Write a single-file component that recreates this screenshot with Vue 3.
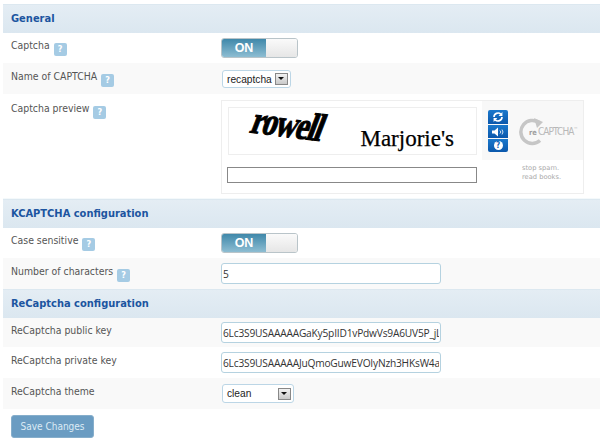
<template>
  <div class="page">
    <h3 class="section-head">General</h3>
    <div class="row">
      <label class="row-label">Captcha <span class="help">?</span></label>
      <div class="switch"><span class="switch-on">ON</span><span class="switch-off"></span></div>
    </div>
    <div class="row alt">
      <label class="row-label">Name of CAPTCHA <span class="help">?</span></label>
      <div class="select-box">
        <span class="select-value">recaptcha</span>
        <span class="select-arrow"></span>
      </div>
    </div>
    <div class="row preview-row">
      <label class="row-label">Captcha preview <span class="help">?</span></label>
      <div class="captcha">
        <div class="captcha-main">
          <div class="captcha-image">
            <span class="word-one">rowell</span>
            <span class="word-two">Marjorie's</span>
          </div>
          <div class="captcha-input"></div>
        </div>
        <div class="captcha-side">
          <div class="captcha-brand">
            <div class="captcha-buttons">
              <span class="cap-btn">
                <svg width="12" height="12" viewBox="0 0 12 12"><path d="M2 6a4 4 0 0 1 6.800-2.800M10 6a4 4 0 0 1-6.800 2.800" fill="none" stroke="#fff" stroke-width="1.700"/><path d="M10.400 1v4H6.600zM1.600 11V7h3.800z" fill="#fff"/></svg>
              </span>
              <span class="cap-btn">
                <svg width="14" height="12" viewBox="0 0 14 12"><path d="M1 4.500h2.500L7 1.500v9L3.500 7.500H1z" fill="#fff"/><path d="M9 4.500a2 2 0 0 1 0 3M11 3.500a4 4 0 0 1 0 5" fill="none" stroke="#fff" stroke-width=".8"/></svg>
              </span>
              <span class="cap-btn"><span class="cap-q">?</span></span>
            </div>
            <div class="logo">
              <svg class="logo-ring" width="28" height="30" viewBox="0 0 28 30"><path d="M21 23.500a11.500 11.500 0 1 1 -1 -18" fill="none" stroke="#c6c6c6" stroke-width="3.500"/><path d="M15 1l9 4-6 6z" fill="#c6c6c6"/></svg>
              <span class="logo-text"><b>re</b>CAPTCHA<sup>™</sup></span>
            </div>
          </div>
          <div class="slogan">stop spam.<br>read books.</div>
        </div>
      </div>
    </div>

    <h3 class="section-head">KCAPTCHA configuration</h3>
    <div class="row">
      <label class="row-label">Case sensitive <span class="help">?</span></label>
      <div class="switch"><span class="switch-on">ON</span><span class="switch-off"></span></div>
    </div>
    <div class="row alt">
      <label class="row-label">Number of characters <span class="help">?</span></label>
      <input class="text-input" type="text" value="5">
    </div>

    <h3 class="section-head">ReCaptcha configuration</h3>
    <div class="row alt short">
      <label class="row-label">ReCaptcha public key</label>
      <input class="text-input" type="text" value="6Lc3S9USAAAAAGaKy5pIID1vPdwVs9A6UV5P_jL">
    </div>
    <div class="row tall">
      <label class="row-label">ReCaptcha private key</label>
      <input class="text-input" type="text" value="6Lc3S9USAAAAAJuQmoGuwEVOIyNzh3HKsW4aI">
    </div>
    <div class="row alt">
      <label class="row-label">ReCaptcha theme</label>
      <div class="select-box wide">
        <span class="select-value">clean</span>
        <span class="select-arrow"></span>
      </div>
    </div>

    <button class="save" type="button">Save Changes</button>
  </div>
</template>

<script setup>
</script>

<style>
html, body {
  background: #fff;
  overflow: hidden;
}
</style>

<style scoped>
.page {
  padding: 4px 0 0 3px;
  font-family: "DejaVu Sans Condensed", "DejaVu Sans", Verdana, sans-serif;
  font-size: 10.400px;
  color: #555;
  width: 597px;
  height: 440px;
}

.section-head {
  margin: 0;
  height: 29px;
  line-height: 28px;
  padding-left: 8px;
  font-size: 11px;
  font-weight: bold;
  color: #1c55a0;
  background: linear-gradient(#e4edf4, #dbe7f0);
  border-top: 1px solid #dce8f0;
  box-sizing: border-box;
}

.row {
  display: flex;
  align-items: flex-start;
  height: 30px;
  box-sizing: border-box;
  padding-top: 4px;
  background: #fff;
}

.row.alt,
.row.tall {
  height: 31px;
  padding-top: 5px;
}

.row.alt {
  background: #f9f9f9;
}

.row.short {
  height: 29px;
  padding-top: 4px;
}

.preview-row {
  height: 105px;
  padding-top: 6px;
  background: linear-gradient(#fff 104px, #f4f9fb 104px);
}

.row-label {
  width: 218px;
  padding-left: 8px;
  box-sizing: border-box;
  line-height: 17px;
  flex: none;
}

.help {
  display: inline-block;
  width: 13px;
  height: 13px;
  margin-left: 1px;
  border-radius: 2px;
  background: #a5cbe4;
  color: #fff;
  font-size: 9px;
  font-weight: bold;
  line-height: 13px;
  text-align: center;
  vertical-align: -3px;
}

.switch {
  display: flex;
  width: 77px;
  height: 20px;
  margin-top: 1px;
  border: 1px solid #b9c4c9;
  border-radius: 3px;
  overflow: hidden;
  box-sizing: border-box;
}

.switch-on {
  width: 44px;
  background: linear-gradient(#3f88aa, #8dbdd2);
  color: #fff;
  font-family: "Liberation Sans", sans-serif;
  font-size: 12.500px;
  font-weight: bold;
  line-height: 18px;
  text-align: center;
}

.switch-off {
  flex: 1;
  background: linear-gradient(#fafafa, #e6e6e6);
}

.select-box {
  display: flex;
  align-items: center;
  justify-content: space-between;
  width: 69px;
  height: 18px;
  margin: 2px 0 0 1px;
  padding: 0 2px 0 4px;
  box-sizing: border-box;
  background: #fff;
  border: 1px solid #bcd6e6;
  border-radius: 3px;
  font-family: "Liberation Sans", sans-serif;
  font-size: 10.200px;
  color: #222;
}

.select-box.wide {
  width: 72px;
  height: 19px;
  margin-top: 1px;
}

.select-arrow {
  position: relative;
  width: 13px;
  height: 12px;
  border: 1px solid #888;
  background: linear-gradient(#f2f2f2, #c9c9c9);
  box-sizing: border-box;
}

.select-arrow::after {
  content: "";
  position: absolute;
  left: 2px;
  top: 3px;
  border: 3.500px solid transparent;
  border-top: 3.500px solid #111;
  border-bottom: 0;
}

.text-input {
  width: 220px;
  height: 21px;
  margin: 0;
  padding: 0 1px;
  box-sizing: border-box;
  background: #fff;
  border: 1px solid #b5d2e0;
  border-radius: 3px;
  outline: none;
  font-family: "Open Sans", "DejaVu Sans", sans-serif;
  font-size: 10.200px;
  line-height: 17px;
  letter-spacing: -.2px;
  color: #333;
}

.captcha {
  display: flex;
  width: 363px;
  height: 94px;
  box-sizing: border-box;
  border: 1px solid #eeeeee;
}

.captcha-main {
  width: 260px;
  padding: 6px 0 0 5px;
  box-sizing: border-box;
}

.captcha-image {
  display: flex;
  justify-content: space-between;
  width: 249px;
  height: 48px;
  margin-left: 1px;
  box-sizing: border-box;
  border: 1px solid #eee;
  color: #000;
}

.word-one {
  margin: 0 0 0 24px;
  height: 32px;
  font-family: "Liberation Serif", serif;
  font-size: 30px;
  font-weight: bold;
  letter-spacing: -1.500px;
  line-height: 32px;
  -webkit-text-stroke: .8px #000;
  transform: rotate(7deg) skewX(-14deg) scaleY(1.3);
}

.word-two {
  margin: 18px 22px 0 0;
  height: 26px;
  font-family: "Liberation Serif", serif;
  font-size: 23px;
  line-height: 26px;
  -webkit-text-stroke: .25px #000;
}

.captcha-input {
  width: 250px;
  height: 16px;
  margin-top: 12px;
  box-sizing: border-box;
  border: 1px solid #888;
  background: #fff;
}

.captcha-side {
  flex: 1;
}

.captcha-brand {
  display: flex;
  align-items: center;
  height: 59px;
  background: #f8f8f8;
  padding-left: 6px;
}

.captcha-buttons {
  display: flex;
  flex-direction: column;
  gap: 1px;
  width: 20px;
  margin-top: 1px;
}

.cap-btn {
  display: flex;
  align-items: center;
  justify-content: center;
  height: 13px;
  background: linear-gradient(#1a78cc, #0b58ac);
}

.cap-btn:first-child {
  border-radius: 2px 2px 0 0;
  height: 14px;
}

.cap-btn:last-child {
  border-radius: 0 0 2px 2px;
}

.cap-q {
  width: 9px;
  height: 9px;
  border-radius: 50%;
  background: #fff;
  color: #0f62b5;
  font-size: 8px;
  font-weight: bold;
  line-height: 9px;
  text-align: center;
}

.logo {
  position: relative;
  width: 62px;
  height: 30px;
  margin: 2px 0 0 11px;
}

.logo-text {
  position: absolute;
  left: 10px;
  top: 9px;
  font-family: "DejaVu Sans Condensed", "Liberation Sans", sans-serif;
  font-size: 10px;
  color: #b8b8b8;
  letter-spacing: -.9px;
  white-space: nowrap;
}

.logo-text b {
  font-size: 7.500px;
  color: #a0a0a0;
  letter-spacing: 0;
  margin-right: 1px;
}

.logo-text sup {
  font-size: 5px;
  line-height: 0;
}

.slogan {
  margin: 4px 0 0 40px;
  font-family: "DejaVu Sans", sans-serif;
  font-size: 6.700px;
  line-height: 9px;
  color: #aaa;
}

.save {
  display: block;
  width: 83px;
  height: 23px;
  margin: 6px 0 0 8px;
  padding: 0;
  border: 1px solid #86aecb;
  border-radius: 3px;
  background: #6a9cc2;
  color: #dcebf5;
  font-family: "DejaVu Sans Condensed", "DejaVu Sans", sans-serif;
  font-size: 10px;
}
</style>
